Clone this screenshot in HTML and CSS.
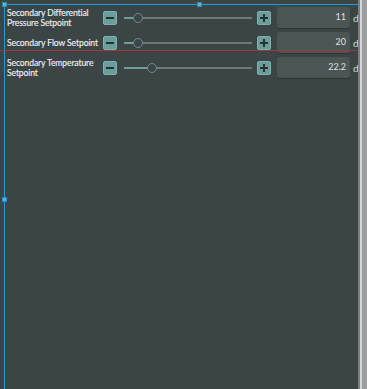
FILE: index.html
```html
<!DOCTYPE html>
<html>
<head>
<meta charset="utf-8">
<link rel="stylesheet" href="styles.css">
</head>
<body>
<div class="page">
  <div class="panel">
    <div class="row">
      <div class="label">Secondary Differential<br>Pressure Setpoint</div>
      <div class="btn"><span class="minus"></span></div>
      <div class="slider"><div class="fill" style="width:14px"></div><div class="thumb"></div><div class="rest"></div></div>
      <div class="btn"><span class="minus"></span><span class="vbar"></span></div>
      <div class="input">11</div>
      <div class="unit">d</div>
    </div>
    <div class="row">
      <div class="label">Secondary Flow Setpoint</div>
      <div class="btn"><span class="minus"></span></div>
      <div class="slider"><div class="fill" style="width:14px"></div><div class="thumb"></div><div class="rest"></div></div>
      <div class="btn"><span class="minus"></span><span class="vbar"></span></div>
      <div class="input">20</div>
      <div class="unit">d</div>
    </div>
    <div class="row">
      <div class="label">Secondary Temperature<br>Setpoint</div>
      <div class="btn"><span class="minus"></span></div>
      <div class="slider"><div class="fill" style="width:28px"></div><div class="thumb"></div><div class="rest"></div></div>
      <div class="btn"><span class="minus"></span><span class="vbar"></span></div>
      <div class="input">22.2</div>
      <div class="unit">d</div>
    </div>
    <div class="sel-top"></div>
    <div class="sel-left"></div>
    <div class="handle h1"></div>
    <div class="handle h2"></div>
    <div class="handle h3"></div>
    <div class="red-line"></div>
  </div>
  <div class="scroll"><div class="s1"></div><div class="s2"></div><div class="s3"></div></div>
</div>
</body>
</html>
```
FILE: styles.css
```css
html, body {
  margin: 0;
  padding: 0;
  background: #3b4545;
  width: 367px;
  height: 389px;
  overflow: hidden;
}
.page {
  display: flex;
  height: 389px;
}
.panel {
  position: relative;
  width: 358px;
  height: 389px;
  overflow: hidden;
  padding: 7px 0 0 7px;
  box-sizing: border-box;
  display: flex;
  flex-direction: column;
  gap: 4px;
  font-family: Lato, "Open Sans", sans-serif;
  color: #eceeee;
}
.row {
  display: flex;
  align-items: center;
  height: 21px;
  flex-shrink: 0;
}
.label {
  width: 96px;
  flex-shrink: 0;
  font-size: 8.6px;
  letter-spacing: -0.12px;
  line-height: 10px;
  white-space: nowrap;
  padding-top: 1px;
  -webkit-text-stroke: 0.15px #eceeee;
}
.btn {
  position: relative;
  width: 14px;
  height: 14px;
  box-sizing: border-box;
  background: #6b9e9b;
  border: 1px solid #7fb0ad;
  border-radius: 2px;
  flex-shrink: 0;
}
.minus {
  position: absolute;
  left: 2px;
  top: 5px;
  width: 8px;
  height: 2px;
  background: #263232;
}
.vbar {
  position: absolute;
  left: 5px;
  top: 2px;
  width: 2px;
  height: 8px;
  background: #263232;
}
.slider {
  display: flex;
  align-items: center;
  width: 128px;
  margin-left: 7px;
  margin-right: 5px;
  flex-shrink: 0;
}
.fill {
  height: 2px;
  background: #6f9d9a;
  flex-shrink: 0;
}
.thumb {
  width: 10px;
  height: 10px;
  box-sizing: border-box;
  border: 1.5px solid #6d8c8a;
  border-radius: 50%;
  background: #3b4545;
  flex-shrink: 0;
  margin-left: -5px;
  margin-right: -5px;
  position: relative;
  z-index: 1;
}
.rest {
  flex: 1;
  height: 2px;
  background: #6e7878;
}
.input {
  width: 73px;
  height: 21px;
  box-sizing: border-box;
  margin-left: 6px;
  background: #4a5554;
  border-radius: 3px;
  box-shadow: 0 1px 1px rgba(0,0,0,0.25);
  font-size: 9px;
  text-align: right;
  padding-right: 4px;
  line-height: 20px;
  color: #e0e2e2;
  flex-shrink: 0;
}
.unit {
  margin-left: 3px;
  font-size: 10px;
  color: #d8dada;
}
.sel-top {
  position: absolute;
  left: 4px;
  top: 4px;
  width: 360px;
  height: 1px;
  background: #1aa0d0;
}
.sel-left {
  position: absolute;
  left: 4px;
  top: 4px;
  width: 1px;
  height: 400px;
  background: #1aa0d0;
}
.handle {
  position: absolute;
  width: 5px;
  height: 5px;
  background: #6aaecc;
  border: 1px solid #2f8db5;
  box-sizing: border-box;
}
.h1 { left: 2px; top: 2px; }
.h2 { left: 197px; top: 2px; }
.h3 { left: 2px; top: 197px; }
.red-line {
  position: absolute;
  left: 0;
  top: 50px;
  width: 358px;
  height: 1px;
  background: #9a3a3a;
}
.scroll {
  display: flex;
  width: 9px;
  height: 389px;
}
.s1 { width: 2px; background: #7a7f80; }
.s2 { width: 2px; background: #d4d6d6; }
.s3 { flex: 1; background: #9a9d9e; }
```
